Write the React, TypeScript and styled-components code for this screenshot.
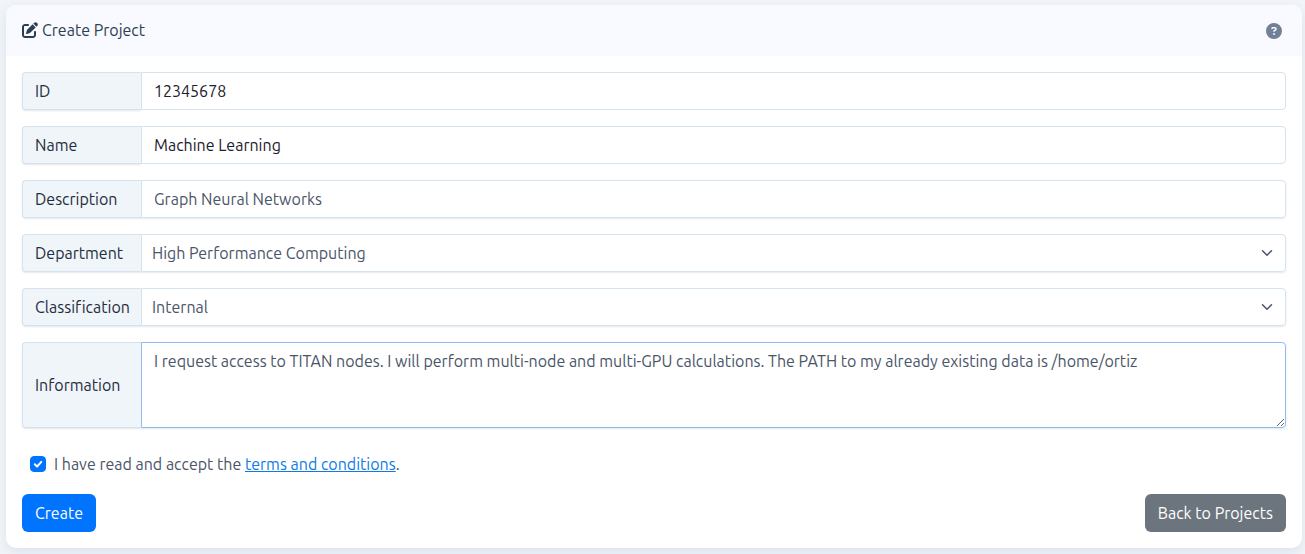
import React, { useEffect, useId, useRef } from "react";
import styled, { createGlobalStyle, css } from "styled-components";
import { FaCircleQuestion, FaPenToSquare } from "react-icons/fa6";

const GlobalStyle = createGlobalStyle`
  *, *::before, *::after { box-sizing: border-box; }
  body {
    margin: 0;
    background: #f1f5f9;
    color: #4a5568;
    font-family: Ubuntu, "Noto Sans", sans-serif;
    font-size: 16px;
    line-height: 24px;
    text-rendering: optimizeSpeed;
  }
`;

const Page = styled.main`
  padding: 5px 3px 6px 6px;
`;

const Card = styled.form`
  border-radius: 10px;
  background: #fff;
  box-shadow: 0 4px 12px rgba(45, 65, 95, 0.1);
`;

const CardHeader = styled.header`
  display: flex;
  align-items: flex-start;
  justify-content: space-between;
  padding: 13px 20px 14px 16px;
  border-radius: 10px 10px 0 0;
  background: #f8faff;
`;

const Title = styled.h1`
  display: flex;
  align-items: center;
  gap: 4px;
  margin: 0;
  color: #2d3e50;
  font-size: 16px;
  font-weight: 400;
`;

const HelpButton = styled.button`
  display: flex;
  padding: 5px 0 0;
  border: 0;
  background: none;
  color: #718096;
  font-size: 16px;
`;

const CardBody = styled.div`
  display: flex;
  flex-direction: column;
  gap: 16px;
  padding: 16px;
`;

const Group = styled.div<{ $raised?: boolean }>`
  display: grid;
  grid-template-columns: 119px minmax(0, 1fr);
  border-radius: 4px;
  box-shadow: ${({ $raised }) => ($raised ? "0 1px 2px rgba(60, 90, 120, 0.14)" : "none")};
`;

const GroupLabel = styled.label<{ $raised?: boolean }>`
  display: flex;
  align-items: center;
  padding: 0 0 0 12px;
  border: 1px solid #d5e3ef;
  border-right: 0;
  border-radius: 4px 0 0 4px;
  background: #eff5f9;
  box-shadow: ${({ $raised }) => ($raised ? "none" : "0 1px 2px rgba(60, 90, 120, 0.14)")};
  color: #1f2d3d;
  white-space: nowrap;
`;

const control = css`
  width: 100%;
  margin: 0;
  border: 1px solid #d5e3ef;
  border-radius: 0 4px 4px 0;
  outline: 0;
  background: #fff;
  font: inherit;
  text-rendering: inherit;
`;

const TextInput = styled.input<{ $strong?: boolean }>`
  ${control}
  height: 38px;
  padding: 0 12px;
  color: ${({ $strong }) => ($strong ? "#1a202c" : "#4a5568")};
`;

const SelectWrap = styled.div`
  display: grid;
  align-items: center;

  > * { grid-area: 1 / 1; }
`;

const Select = styled.select`
  ${control}
  height: 38px;
  padding: 0 36px 0 10px;
  appearance: none;
  color: #4a5568;
`;

const Chevron = styled.svg`
  justify-self: end;
  margin-right: 13px;
  pointer-events: none;
`;

const TextArea = styled.textarea`
  ${control}
  display: block;
  height: 86px;
  padding: 6px 12px;
  resize: vertical;
  color: #4a5568;

  &:focus { border-color: #8fbcf0; }
`;

const Terms = styled.div`
  display: flex;
  align-items: center;
  gap: 8px;
  padding: 8px 8px 2px;
`;

const Tick = styled.input`
  width: 16px;
  height: 16px;
  margin: 0;
  appearance: none;
  border: 1px solid #b6c4d2;
  border-radius: 4px;

  &:checked {
    border-color: #0073ff;
    background: #0073ff url("data:image/svg+xml,%3Csvg xmlns='http://www.w3.org/2000/svg' viewBox='0 0 16 16'%3E%3Cpath d='M4.8 8.3l2.3 2.2 4.2-4.6' fill='none' stroke='white' stroke-width='2' stroke-linecap='round' stroke-linejoin='round'/%3E%3C/svg%3E") center / 16px no-repeat;
  }
`;

const TermsLink = styled.a`
  color: #0d7ae5;
  text-decoration: underline;
`;

const Actions = styled.div`
  display: flex;
  justify-content: space-between;
`;

const Button = styled.button<{ $variant: "primary" | "secondary" }>`
  height: 38px;
  padding: 0 13px;
  border: 0;
  border-radius: 6px;
  background: ${({ $variant }) => ($variant === "primary" ? "#0073ff" : "#6c757d")};
  color: #fff;
  font: inherit;
  text-rendering: inherit;
`;

function TextField({ label, value, strong }: { label: string; value: string; strong?: boolean }) {
  const id = useId();
  return (
    <Group $raised={!strong}>
      <GroupLabel htmlFor={id} $raised={!strong}>{label}</GroupLabel>
      <TextInput id={id} type="text" defaultValue={value} $strong={strong} />
    </Group>
  );
}

function SelectField({ label, options }: { label: string; options: string[] }) {
  const id = useId();
  return (
    <Group $raised>
      <GroupLabel htmlFor={id} $raised>{label}</GroupLabel>
      <SelectWrap>
        <Select id={id}>
          {options.map((option) => (
            <option key={option}>{option}</option>
          ))}
        </Select>
        <Chevron width="12" height="12" viewBox="0 0 16 16" fill="none" aria-hidden="true">
          <path d="M2 5l6 6 6-6" stroke="#4a5568" strokeWidth="2" strokeLinecap="round" strokeLinejoin="round" />
        </Chevron>
      </SelectWrap>
    </Group>
  );
}

function TextAreaField({ label, value }: { label: string; value: string }) {
  const id = useId();
  const ref = useRef<HTMLTextAreaElement>(null);

  // Start with the cursor after the last character.
  useEffect(() => {
    ref.current?.focus();
    ref.current?.setSelectionRange(value.length, value.length);
  }, [value]);

  return (
    <Group $raised>
      <GroupLabel htmlFor={id} $raised>{label}</GroupLabel>
      <TextArea id={id} ref={ref} defaultValue={value} spellCheck={false} />
    </Group>
  );
}

export default function App() {
  return (
    <>
      <GlobalStyle />
      <Page>
        <Card onSubmit={(event) => event.preventDefault()}>
          <CardHeader>
            <Title>
              <FaPenToSquare aria-hidden="true" />
              Create Project
            </Title>
            <HelpButton type="button" aria-label="Help">
              <FaCircleQuestion />
            </HelpButton>
          </CardHeader>
          <CardBody>
            <TextField label="ID" value="12345678" strong />
            <TextField label="Name" value="Machine Learning" strong />
            <TextField label="Description" value="Graph Neural Networks" />
            <SelectField label="Department" options={["High Performance Computing"]} />
            <SelectField label="Classification" options={["Internal"]} />
            <TextAreaField
              label="Information"
              value="I request access to TITAN nodes. I will perform multi-node and multi-GPU calculations. The PATH to my already existing data is /home/ortiz"
            />
            <Terms>
              <Tick type="checkbox" id="accept-terms" defaultChecked />
              <label htmlFor="accept-terms">
                I have read and accept the <TermsLink href="#terms">terms and conditions</TermsLink>.
              </label>
            </Terms>
            <Actions>
              <Button type="submit" $variant="primary">Create</Button>
              <Button type="button" $variant="secondary">Back to Projects</Button>
            </Actions>
          </CardBody>
        </Card>
      </Page>
    </>
  );
}
